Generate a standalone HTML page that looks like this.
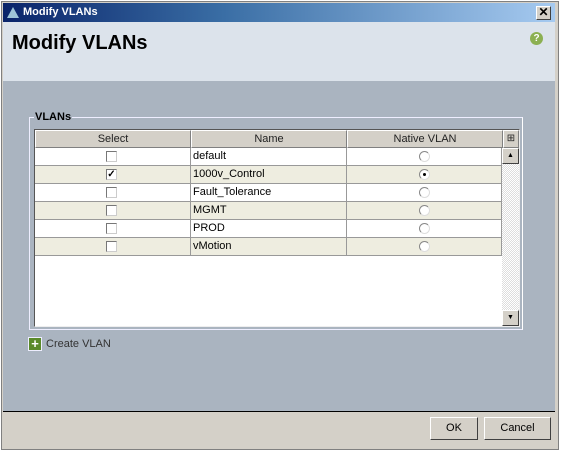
<!DOCTYPE html>
<html><head><style>
*{margin:0;padding:0;box-sizing:border-box}
body{width:561px;height:451px;background:#fff;font-family:"Liberation Sans",Tahoma,sans-serif;font-size:11px;position:relative;overflow:hidden}
.win{position:absolute;left:1px;top:1px;width:558px;height:449px;background:#d4d0c8;border:1px solid #808080}
.tb{position:absolute;left:3px;top:3px;width:552px;height:19px;background:linear-gradient(90deg,#0a246a,#3a6ea5 40%,#a6caf0);color:#fff;font-weight:bold;font-size:11px;line-height:19px;padding-left:20px}
.x{position:absolute;right:4px;top:3px;width:15px;height:14px;background:#d4d0c8;border:1px solid #404040;border-top-color:#fff;border-left-color:#fff;color:#000;font-size:12px;line-height:11px;text-align:center}
.hd{position:absolute;left:3px;top:22px;width:552px;height:59px;background:#dce3eb}
.hd h1{position:absolute;left:9px;top:10px;font-size:20px;font-weight:bold;color:#000}
.help{position:absolute;right:12px;top:10px;width:13px;height:13px;border-radius:50%;background:#8cb052;color:#fff;font-size:10px;font-weight:bold;text-align:center;line-height:13px}
.bd{position:absolute;left:3px;top:81px;width:552px;height:331px;background:#aab4c0;border-bottom:1px solid #000}
.fs{position:absolute;left:26px;top:36px;width:494px;height:213px;border:1px solid #eef;border-right-color:#fff;}
.lg{position:absolute;left:4px;top:-7px;background:#aab4c0;font-weight:bold;padding:0 1px;font-size:11px}
.tbl{position:absolute;left:4px;top:11px;width:486px;height:198px;background:#fff;border:1px solid #555;border-right-color:#eee;border-bottom-color:#eee}
.th{position:absolute;top:0;height:18px;background:#d4d0c8;border:1px solid #fff;border-right-color:#808080;border-bottom-color:#808080;text-align:center;line-height:16px;color:#222}
.row{position:absolute;left:0;width:467px;height:18px;border-bottom:1px solid #999}
.row div{position:absolute;top:0;height:17px;line-height:17px;border-right:1px solid #999}
.cb{position:absolute;left:71px;top:3px;width:11px;height:11px;border:1px solid #777;border-right-color:#ccc;border-bottom-color:#ccc;background:#fff}
.rd{position:absolute;left:72px;top:3px;width:11px;height:11px;border-radius:50%;border:1px solid #888;border-right-color:#ddd;border-bottom-color:#ddd;background:#fff}
.sb{position:absolute;left:467px;top:18px;width:17px;height:178px;background:repeating-conic-gradient(#ddd 0 25%,#fff 0 50%) 0 0/2px 2px}
.ar{position:absolute;left:0;width:17px;height:16px;background:#d4d0c8;border:1px solid #fff;border-right-color:#404040;border-bottom-color:#404040;font-size:7px;text-align:center;line-height:14px}
.cv{position:absolute;left:25px;top:256px;color:#333;font-size:11px;line-height:14px}
.pl{display:inline-block;width:14px;height:14px;background:#5a8a2a;border:1px solid #eef;color:#fff;font-weight:bold;text-align:center;line-height:12px;font-size:13px;vertical-align:top;margin-right:4px}
.btn{position:absolute;top:417px;height:23px;background:#d4d0c8;border:1px solid #fff;border-right-color:#404040;border-bottom-color:#404040;text-align:center;line-height:21px;font-size:11px;color:#000}
</style></head><body>
<div class="win"></div>
<div class="tb"><span style="position:absolute;left:4px;top:4px;width:0;height:0;border-left:6px solid transparent;border-right:6px solid transparent;border-bottom:11px solid #9ec5d8"></span>Modify VLANs<div class="x">✕</div></div>
<div class="hd"><h1>Modify VLANs</h1><div class="help">?</div></div>
<div class="bd">
<div class="fs"><span class="lg">VLANs</span>
<div class="tbl">
<div class="th" style="left:0;width:156px">Select</div>
<div class="th" style="left:156px;width:156px">Name</div>
<div class="th" style="left:312px;width:156px">Native VLAN</div>
<div class="th" style="left:468px;width:16px;font-size:10px">⊞</div>
<div class="row" style="top:18px;background:#fff"><div style="left:0;width:156px"><span class="cb"></span></div><div style="left:156px;width:156px;padding-left:2px">default</div><div style="left:312px;width:155px"><span class="rd"></span></div></div>
<div class="row" style="top:36px;background:#eeede0"><div style="left:0;width:156px"><span class="cb" style="font-size:10px;line-height:9px;text-align:center;font-weight:bold">✓</span></div><div style="left:156px;width:156px;padding-left:2px">1000v_Control</div><div style="left:312px;width:155px"><span class="rd"><span style="position:absolute;left:3px;top:3px;width:3px;height:3px;background:#000;border-radius:50%"></span></span></div></div>
<div class="row" style="top:54px;background:#fff"><div style="left:0;width:156px"><span class="cb"></span></div><div style="left:156px;width:156px;padding-left:2px">Fault_Tolerance</div><div style="left:312px;width:155px"><span class="rd"></span></div></div>
<div class="row" style="top:72px;background:#eeede0"><div style="left:0;width:156px"><span class="cb"></span></div><div style="left:156px;width:156px;padding-left:2px">MGMT</div><div style="left:312px;width:155px"><span class="rd"></span></div></div>
<div class="row" style="top:90px;background:#fff"><div style="left:0;width:156px"><span class="cb"></span></div><div style="left:156px;width:156px;padding-left:2px">PROD</div><div style="left:312px;width:155px"><span class="rd"></span></div></div>
<div class="row" style="top:108px;background:#eeede0"><div style="left:0;width:156px"><span class="cb"></span></div><div style="left:156px;width:156px;padding-left:2px">vMotion</div><div style="left:312px;width:155px"><span class="rd"></span></div></div>
<div class="sb"><div class="ar" style="top:0">▲</div><div class="ar" style="bottom:0">▼</div></div>
</div></div>
<div class="cv"><span class="pl">+</span>Create VLAN</div>
</div>
<div class="btn" style="left:430px;width:48px">OK</div>
<div class="btn" style="left:484px;width:67px">Cancel</div>
</body></html>
